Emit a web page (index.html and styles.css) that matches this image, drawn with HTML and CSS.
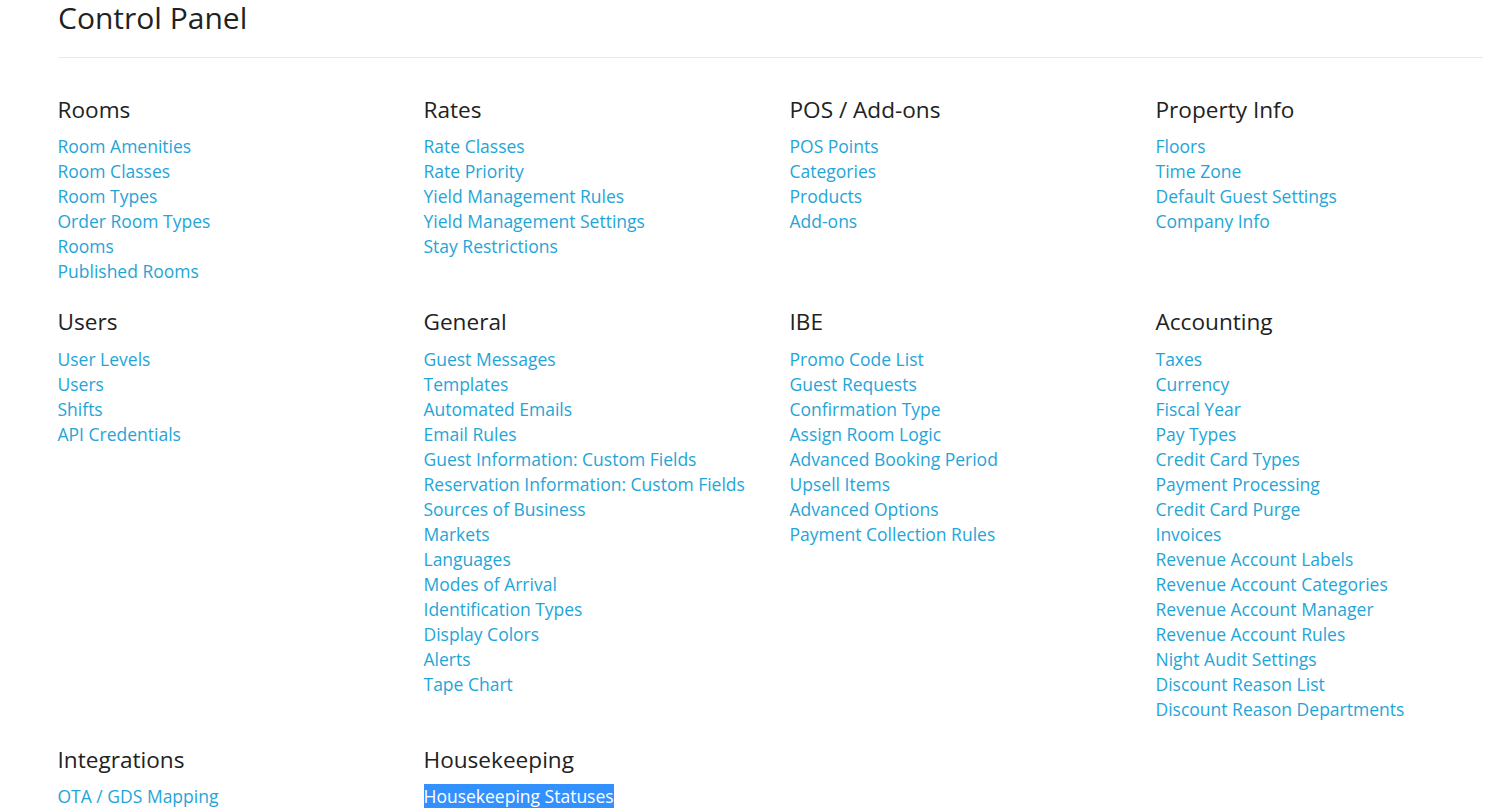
FILE: index.html
```html
<!DOCTYPE html>
<html>
<head>
<meta charset="utf-8">
<link rel="stylesheet" href="styles.css">
</head>
<body>
<div class="page">
  <h1 class="title">Control Panel</h1>
  <hr class="rule">
  <div class="grid">
    <section class="group">
      <h2 class="group-title">Rooms</h2>
      <a class="link">Room Amenities</a>
      <a class="link">Room Classes</a>
      <a class="link">Room Types</a>
      <a class="link">Order Room Types</a>
      <a class="link">Rooms</a>
      <a class="link">Published Rooms</a>
    </section>
    <section class="group">
      <h2 class="group-title">Rates</h2>
      <a class="link">Rate Classes</a>
      <a class="link">Rate Priority</a>
      <a class="link">Yield Management Rules</a>
      <a class="link">Yield Management Settings</a>
      <a class="link">Stay Restrictions</a>
    </section>
    <section class="group">
      <h2 class="group-title">POS / Add-ons</h2>
      <a class="link">POS Points</a>
      <a class="link">Categories</a>
      <a class="link">Products</a>
      <a class="link">Add-ons</a>
    </section>
    <section class="group">
      <h2 class="group-title">Property Info</h2>
      <a class="link">Floors</a>
      <a class="link">Time Zone</a>
      <a class="link">Default Guest Settings</a>
      <a class="link">Company Info</a>
    </section>

    <section class="group">
      <h2 class="group-title">Users</h2>
      <a class="link">User Levels</a>
      <a class="link">Users</a>
      <a class="link">Shifts</a>
      <a class="link">API Credentials</a>
    </section>
    <section class="group">
      <h2 class="group-title">General</h2>
      <a class="link">Guest Messages</a>
      <a class="link">Templates</a>
      <a class="link">Automated Emails</a>
      <a class="link">Email Rules</a>
      <a class="link">Guest Information: Custom Fields</a>
      <a class="link">Reservation Information: Custom Fields</a>
      <a class="link">Sources of Business</a>
      <a class="link">Markets</a>
      <a class="link">Languages</a>
      <a class="link">Modes of Arrival</a>
      <a class="link">Identification Types</a>
      <a class="link">Display Colors</a>
      <a class="link">Alerts</a>
      <a class="link">Tape Chart</a>
    </section>
    <section class="group">
      <h2 class="group-title">IBE</h2>
      <a class="link">Promo Code List</a>
      <a class="link">Guest Requests</a>
      <a class="link">Confirmation Type</a>
      <a class="link">Assign Room Logic</a>
      <a class="link">Advanced Booking Period</a>
      <a class="link">Upsell Items</a>
      <a class="link">Advanced Options</a>
      <a class="link">Payment Collection Rules</a>
    </section>
    <section class="group">
      <h2 class="group-title">Accounting</h2>
      <a class="link">Taxes</a>
      <a class="link">Currency</a>
      <a class="link">Fiscal Year</a>
      <a class="link">Pay Types</a>
      <a class="link">Credit Card Types</a>
      <a class="link">Payment Processing</a>
      <a class="link">Credit Card Purge</a>
      <a class="link">Invoices</a>
      <a class="link">Revenue Account Labels</a>
      <a class="link">Revenue Account Categories</a>
      <a class="link">Revenue Account Manager</a>
      <a class="link">Revenue Account Rules</a>
      <a class="link">Night Audit Settings</a>
      <a class="link">Discount Reason List</a>
      <a class="link">Discount Reason Departments</a>
    </section>

    <section class="group">
      <h2 class="group-title">Integrations</h2>
      <a class="link">OTA / GDS Mapping</a>
    </section>
    <section class="group">
      <h2 class="group-title">Housekeeping</h2>
      <a class="link"><span class="selected">Housekeeping Statuses</span></a>
    </section>
  </div>
</div>
</body>
</html>
```
FILE: styles.css
```css
html, body {
  margin: 0;
  padding: 0;
  background: #ffffff;
}
body {
  font-family: "Open Sans", "Liberation Sans", sans-serif;
  color: #222222;
  overflow: hidden;
}
.page {
  padding: 0 15px 0 58px;
}
.title {
  margin: 0;
  font-size: 30px;
  font-weight: 400;
  line-height: 35px;
  color: #222222;
}
.rule {
  border: 0;
  border-top: 1px solid #eaeaea;
  margin: 21.5px 0 40px 0;
  height: 0;
}
.grid {
  display: grid;
  grid-template-columns: repeat(4, 366px);
  row-gap: 26px;
  margin-left: -0.5px;
}
.group {
  display: flex;
  flex-direction: column;
  align-items: flex-start;
}
.group-title {
  margin: 0 0 12.5px 0;
  font-size: 22.6px;
  font-weight: 400;
  line-height: 24px;
  color: #222222;
}
.link {
  font-size: 17.5px;
  line-height: 25px;
  color: #1fa5d8;
  text-decoration: none;
  cursor: pointer;
}
.selected {
  background: #3390ff;
  color: #ffffff;
}
```
